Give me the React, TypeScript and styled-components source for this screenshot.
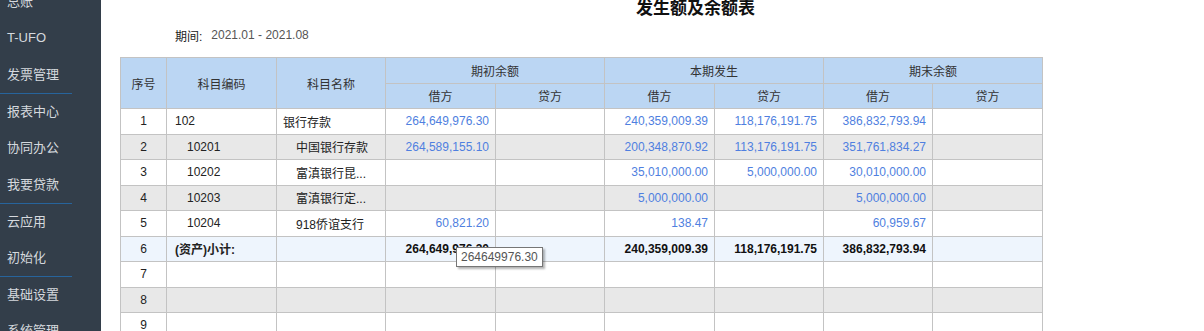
import React from "react";
import styled, { createGlobalStyle } from "styled-components";

const GlobalStyle = createGlobalStyle`
  html, body {
    margin: 0;
    padding: 0;
    background: #ffffff;
    overflow: hidden;
  }
  body {
    font-family: "Liberation Sans", "Noto Sans CJK SC", sans-serif;
    font-size: 12px;
    color: #333333;
  }
`;

interface MenuItem {
  label: string;
  divider?: boolean;
}

const menu: MenuItem[] = [
  { label: "总账" },
  { label: "T-UFO" },
  { label: "发票管理", divider: true },
  { label: "报表中心" },
  { label: "协同办公" },
  { label: "我要贷款", divider: true },
  { label: "云应用" },
  { label: "初始化", divider: true },
  { label: "基础设置" },
  { label: "系统管理" },
];

interface Row {
  no: number;
  code?: string;
  name?: string;
  sub?: boolean;
  total?: boolean;
  values: string[];
}

const rows: Row[] = [
  {
    no: 1,
    code: "102",
    name: "银行存款",
    values: ["264,649,976.30", "", "240,359,009.39", "118,176,191.75", "386,832,793.94", ""],
  },
  {
    no: 2,
    code: "10201",
    name: "中国银行存款",
    sub: true,
    values: ["264,589,155.10", "", "200,348,870.92", "113,176,191.75", "351,761,834.27", ""],
  },
  {
    no: 3,
    code: "10202",
    name: "富滇银行昆...",
    sub: true,
    values: ["", "", "35,010,000.00", "5,000,000.00", "30,010,000.00", ""],
  },
  {
    no: 4,
    code: "10203",
    name: "富滇银行定...",
    sub: true,
    values: ["", "", "5,000,000.00", "", "5,000,000.00", ""],
  },
  {
    no: 5,
    code: "10204",
    name: "918侨谊支行",
    sub: true,
    values: ["60,821.20", "", "138.47", "", "60,959.67", ""],
  },
  {
    no: 6,
    code: "(资产)小计:",
    total: true,
    values: ["264,649,976.30", "", "240,359,009.39", "118,176,191.75", "386,832,793.94", ""],
  },
  { no: 7, values: ["", "", "", "", "", ""] },
  { no: 8, values: ["", "", "", "", "", ""] },
  { no: 9, values: ["", "", "", "", "", ""] },
  { no: 10, values: ["", "", "", "", "", ""] },
];

const colWidths = [46, 110, 109, 110, 109, 110, 109, 109, 110];

export default function App() {
  return (
    <>
      <GlobalStyle />
      <Page>
        <Sidebar>
          {menu.map((m) => (
            <MenuEntry key={m.label} divider={m.divider}>
              {m.label}
            </MenuEntry>
          ))}
        </Sidebar>
        <Main>
          <Title>发生额及余额表</Title>
          <Period>
            <PeriodLabel>期间:</PeriodLabel>
            <PeriodValue>2021.01 - 2021.08</PeriodValue>
          </Period>
          <Table>
            <colgroup>
              {colWidths.map((w, i) => (
                <col key={i} style={{ width: w }} />
              ))}
            </colgroup>
            <thead>
              <tr>
                <HeadCell rowSpan={2}>序号</HeadCell>
                <HeadCell rowSpan={2}>科目编码</HeadCell>
                <HeadCell rowSpan={2}>科目名称</HeadCell>
                <HeadCell colSpan={2}>期初余额</HeadCell>
                <HeadCell colSpan={2}>本期发生</HeadCell>
                <HeadCell colSpan={2}>期末余额</HeadCell>
              </tr>
              <tr>
                <HeadCell>借方</HeadCell>
                <HeadCell>贷方</HeadCell>
                <HeadCell>借方</HeadCell>
                <HeadCell>贷方</HeadCell>
                <HeadCell>借方</HeadCell>
                <HeadCell>贷方</HeadCell>
              </tr>
            </thead>
            <tbody>
              {rows.map((r) => (
                <BodyRow
                  key={r.no}
                  tone={r.total ? "total" : r.no % 2 === 0 ? "alt" : "plain"}
                >
                  <NoCell>{r.no}</NoCell>
                  <TextCell indent={r.sub} strong={r.total}>
                    {r.code}
                  </TextCell>
                  <NameCell indent={r.sub}>{r.name}</NameCell>
                  {r.values.map((v, i) => (
                    <AmountCell key={i} strong={r.total}>
                      {v}
                      {r.total && i === 0 && <Tip>264649976.30</Tip>}
                    </AmountCell>
                  ))}
                </BodyRow>
              ))}
            </tbody>
          </Table>
        </Main>
      </Page>
    </>
  );
}

const Page = styled.div`
  display: flex;
  flex-direction: row;
  align-items: flex-start;
  width: 1204px;
  height: 331px;
  overflow: hidden;
`;

const Sidebar = styled.nav`
  width: 101px;
  flex-shrink: 0;
  background: #333e4a;
  display: flex;
  flex-direction: column;
  margin-top: -16px;
  height: 400px;
`;

const MenuEntry = styled.div<{ divider?: boolean }>`
  height: 36px;
  line-height: 36px;
  padding-left: 7px;
  font-size: 13px;
  color: #d5d9de;
  white-space: nowrap;
  flex-shrink: 0;
  border-bottom: ${(p) => (p.divider ? "1px solid #27649c" : "0")};
  margin-right: ${(p) => (p.divider ? "29px" : "0")};
  margin-bottom: ${(p) => (p.divider ? "0" : "0.4px")};
`;

const Main = styled.main`
  flex: 1;
  display: block;
  padding-left: 19px;
`;

const Title = styled.h1`
  margin: 0;
  padding-left: 68px;
  width: 1083px;
  box-sizing: border-box;
  text-align: center;
  font-size: 17px;
  line-height: 20px;
  font-weight: bold;
  color: #111111;
  margin-top: -1px;
`;

const Period = styled.div`
  display: flex;
  align-items: center;
  gap: 9px;
  padding-left: 55px;
  height: 28px;
  margin-top: 2px;
  margin-bottom: 8px;
  font-size: 12px;
`;

const PeriodLabel = styled.span`
  color: #222222;
`;

const PeriodValue = styled.span`
  color: #555555;
`;

const Table = styled.table`
  border-collapse: collapse;
  table-layout: fixed;
  width: 922px;
  font-size: 12px;
`;

const HeadCell = styled.th`
  background: #bbd6f3;
  border: 1px solid #c3c3c3;
  font-weight: normal;
  color: #333333;
  height: 24.5px;
  padding: 0;
  text-align: center;
`;

const rowBg = {
  plain: "#ffffff",
  alt: "#e8e8e8",
  total: "#eef5fd",
};

const BodyRow = styled.tr<{ tone: keyof typeof rowBg }>`
  background: ${(p) => rowBg[p.tone]};
  height: 25.5px;
`;

const NoCell = styled.td`
  border: 1px solid #c3c3c3;
  text-align: center;
  color: #222222;
  padding: 0;
`;

const TextCell = styled.td<{ indent?: boolean; strong?: boolean }>`
  border: 1px solid #c3c3c3;
  padding: 0 0 0 ${(p) => (p.indent ? "20px" : "8px")};
  color: #222222;
  font-weight: ${(p) => (p.strong ? "bold" : "normal")};
  white-space: nowrap;
  overflow: hidden;
`;

const NameCell = styled(TextCell)`
  padding-left: ${(p) => (p.indent ? "19px" : "6px")};
`;

const AmountCell = styled.td<{ strong?: boolean }>`
  border: 1px solid #c3c3c3;
  padding: 0 6px 0 0;
  text-align: right;
  white-space: nowrap;
  position: relative;
  color: ${(p) => (p.strong ? "#111111" : "#4f7fe0")};
  font-weight: ${(p) => (p.strong ? "bold" : "normal")};
`;

const Tip = styled.span`
  position: absolute;
  left: 70px;
  top: 10px;
  padding: 2px 4px;
  background: #ffffff;
  border: 1px solid #767676;
  box-shadow: 2px 2px 2px rgba(0, 0, 0, 0.3);
  color: #555555;
  font-weight: normal;
  font-size: 12px;
  line-height: 14px;
  z-index: 2;
`;
